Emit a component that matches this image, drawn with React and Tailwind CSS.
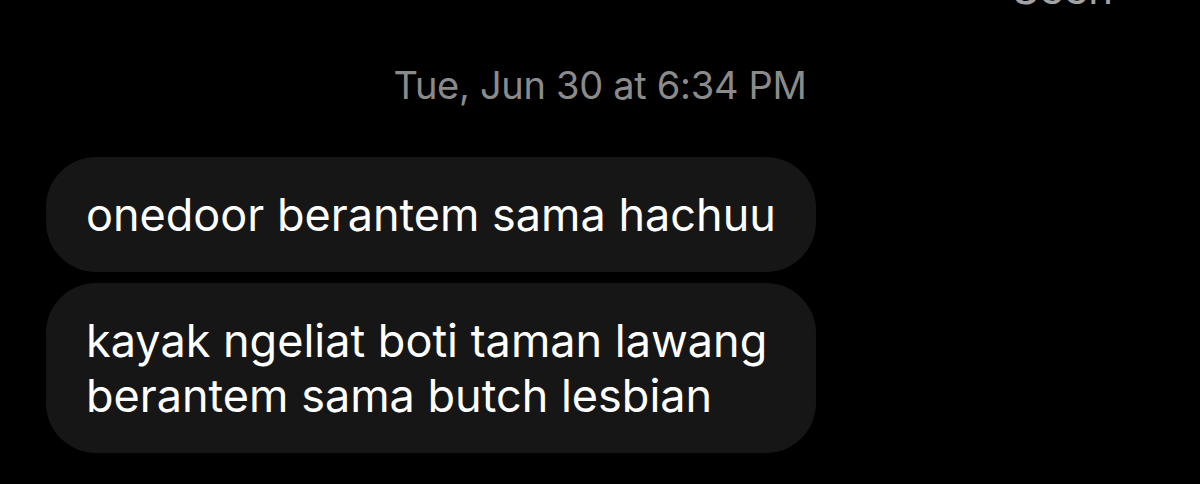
import React from 'react';

const font = { fontFamily: 'Inter, "Noto Sans", sans-serif' };

const Bubble = ({ lines, className }) => (
  <div className={`self-start rounded-[50px] bg-[#161616] py-[30px] pl-10 text-[45px] leading-[55px] text-white ${className}`}>
    {lines.map((line) => (
      <div key={line}>{line}</div>
    ))}
  </div>
);

export default function App() {
  return (
    <div className="h-[484px] w-[1200px] overflow-hidden bg-black" style={font}>
      <div className="flex justify-end pr-[87px]">
        <span className="-mt-[32px] text-[42px] leading-[42px] text-[#a3a3a3]">Seen</span>
      </div>
      <div className="mt-[50px] text-center text-[38px] leading-[50px] tracking-[-0.3px] text-[#8b8b8b]">
        Tue, Jun 30 at 6:34 PM
      </div>
      <div className="mt-[47px] flex flex-col gap-[11px] pl-[46px]">
        <Bubble className="pr-10" lines={['onedoor berantem sama hachuu']} />
        <Bubble className="pr-[49px]" lines={['kayak ngeliat boti taman lawang', 'berantem sama butch lesbian']} />
      </div>
    </div>
  );
}
